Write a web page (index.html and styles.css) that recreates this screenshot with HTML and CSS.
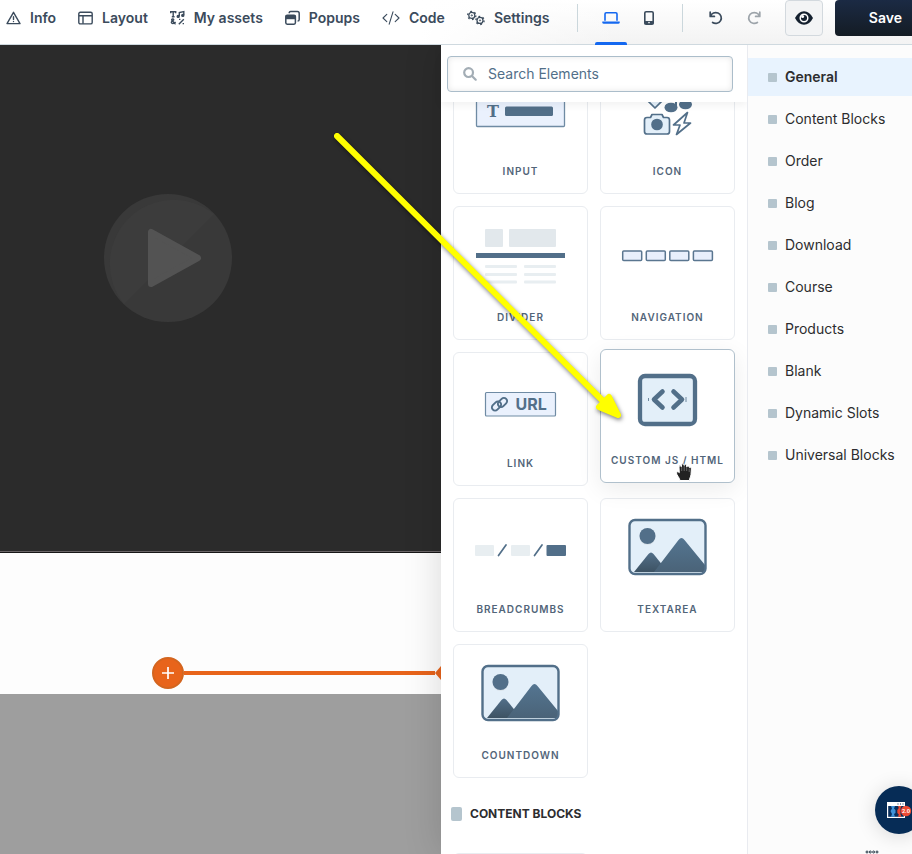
FILE: index.html
```html
<!DOCTYPE html>
<html lang="en">
<head>
<meta charset="utf-8">
<title>Page editor</title>
<link rel="stylesheet" href="styles.css">
</head>
<body>
<header class="toolbar">
  <nav class="menu">
    <button class="menu-item"><svg width="15" height="16" viewBox="0 0 15 16" fill="none" stroke="currentColor" stroke-width="1.4" stroke-linejoin="round" stroke-linecap="round"><path d="M7.5 2.3 14 13.6H1z"/><path d="M7.5 6.8v2.6M7.5 11.4v.1"/></svg>Info</button>
    <button class="menu-item"><svg width="15" height="16" viewBox="0 0 15 16" fill="none" stroke="currentColor" stroke-width="1.4"><rect x=".8" y="2.3" width="13.4" height="11.6" rx="1.5"/><path d="M1 5.8h13M5 5.8v8"/></svg>Layout</button>
    <button class="menu-item"><svg width="15" height="16" viewBox="0 0 15 16" fill="none" stroke="currentColor" stroke-width="1.4"><path d="M.7 3.3V1.8h5v1.5M3.2 2v4.6M1.8 6.7h2.8M9.3 6V2.6l4.5-1V5M5.6 14.2 1.8 10.2c-.9-1.3 2.3-1.9 1.9-.3L1.8 11.4c-1.6 1.8 1.4 3.4 3.8.6M8.8 14.3l5-5"/><circle cx="8.2" cy="6.4" r="1" fill="currentColor"/><circle cx="12.8" cy="5.4" r="1" fill="currentColor"/><path d="M9 9.4h1.4M12.6 13.6H14"/></svg>My assets</button>
    <button class="menu-item"><svg width="15" height="16" viewBox="0 0 15 16" fill="none" stroke="currentColor" stroke-width="1.5"><rect x=".8" y="5.2" width="9.6" height="9" rx="1.4"/><path d="M.8 5.2h9.6v4H.8z" fill="currentColor" stroke="none"/><path d="M4.2 3.3c0-1.2.5-1.7 1.4-1.7h6.8c1.2 0 1.8.6 1.8 1.8v6c0 1-.6 1.6-1.6 1.6"/></svg>Popups</button>
    <button class="menu-item"><svg width="18" height="16" viewBox="0 0 18 16" fill="none" stroke="currentColor" stroke-width="1.1" stroke-linecap="round" stroke-linejoin="round"><path d="M4.8 4.3 1 8l3.8 3.7M13.2 4.3 17 8l-3.8 3.7M11 1.8 7.2 14.2"/></svg>Code</button>
    <button class="menu-item"><svg width="18" height="16" viewBox="0 0 18 16" fill="none" stroke="currentColor"><circle cx="4.8" cy="5.4" r="3" stroke-width="1.2"/><circle cx="4.8" cy="5.4" r="4.1" stroke-width="1.3" stroke-dasharray="1.8 2.5"/><circle cx="4.8" cy="5.4" r=".6"/><circle cx="13" cy="10.4" r="3" stroke-width="1.2"/><circle cx="13" cy="10.4" r="4.1" stroke-width="1.3" stroke-dasharray="1.8 2.5"/><circle cx="13" cy="10.4" r=".6"/></svg>Settings</button>
  </nav>
  <div class="devices">
    <button class="tool tool-active" aria-label="Desktop"><svg width="18" height="16" viewBox="0 0 18 16"><path d="M3 10.8V4q0-1.2 1.2-1.2h9.6Q15 2.800 15 4v6.800" fill="none" stroke="currentColor" stroke-width="1.6"/><path d="M.3 11.500h17.400v.7q0 1.600-1.600 1.600H1.900Q.3 13.800.3 12.200z" fill="currentColor"/></svg></button>
    <button class="tool" aria-label="Mobile"><svg width="12" height="16" viewBox="0 0 12 16"><rect x="1.800" y="1.800" width="8.400" height="12.400" rx="1.300" fill="none" stroke="currentColor" stroke-width="1.600"/><path d="M1.500 11h9v3.200h-9z" fill="currentColor"/><circle cx="6" cy="12.600" r=".8" fill="#fff"/></svg></button>
  </div>
  <div class="history">
    <button class="tool" aria-label="Undo"><svg width="16" height="16" viewBox="0 0 16 16" fill="none" stroke="currentColor" stroke-width="1.700" stroke-linecap="round" stroke-linejoin="round"><path d="M2.200 2.200v4.200h4.200M2.400 6.200A5.600 5.400 0 1 1 4.600 12.500"/></svg></button>
    <button class="tool tool-muted" aria-label="Redo"><svg width="16" height="16" viewBox="0 0 16 16" fill="none" stroke="currentColor" stroke-width="1.700" stroke-linecap="round" stroke-linejoin="round"><path d="M13.800 2.200v4.200H9.600M13.600 6.200A5.600 5.400 0 1 0 11.400 12.500"/></svg></button>
  </div>
  <button class="preview" aria-label="Preview"><svg width="20" height="16" viewBox="0 0 20 16"><path d="M1 8Q4.500 1.200 10 1.200T19 8Q15.500 14.800 10 14.800T1 8z" fill="currentColor"/><circle cx="10" cy="8" r="3.800" fill="none" stroke="#fff" stroke-width="1.500"/><circle cx="8.600" cy="6.600" r="1.500" fill="#fff"/></svg></button>
  <button class="save">Save</button>
</header>
<main class="workspace">
  <section class="canvas" aria-label="Canvas">
    <div class="video">
      <svg width="128" height="128" viewBox="0 0 128 128"><circle cx="64" cy="64" r="64" fill="#393939"/><path d="M20 110A64 64 0 0 1 110 20z" fill="#3c3c3c"/><path d="M47 38v52l47-26z" fill="#535353" stroke="#535353" stroke-width="6" stroke-linejoin="round"/></svg>
    </div>
    <div class="blank">
      <button class="add" aria-label="Add section"><svg width="12" height="12" viewBox="0 0 12 12" stroke="#fff" stroke-width="1.700"><path d="M6 0v12M0 6h12"/></svg></button>
      <div class="add-line"></div>
      <svg width="6" height="16" viewBox="0 0 6 16"><path d="M0 8 6 1v14z" fill="#e8641b"/></svg>
    </div>
    <div class="footer-block"></div>
  </section>
  <section class="panel" aria-label="Elements">
    <div class="search-bar">
      <label class="search"><svg width="14" height="14" viewBox="0 0 14 14" fill="none" stroke="#a3adb5" stroke-width="2.200" stroke-linecap="round"><circle cx="5.600" cy="5.600" r="4.400"/><path d="m9.200 9.200 3.500 3.500"/></svg><input type="text" placeholder="Search Elements" aria-label="Search Elements"></label>
    </div>
    <div class="scroll">
      <div class="cards">
        <button class="card"><svg viewBox="0 0 133 102"><rect x="22.500" y="35" width="88" height="30.500" rx="1" fill="#eaf1fd" stroke="#6f8ba4" stroke-width="1.300"/><text x="33" y="55.500" class="glyph-t">T</text><rect x="51" y="45.500" width="48" height="9.500" rx="1.500" fill="#526f89"/></svg>Input</button>
        <button class="card"><svg viewBox="0 0 133 102" fill="#e3eff9" stroke="#526f89" stroke-width="1.700" stroke-linejoin="round"><path d="M54 47 46 39l4-5h8l4 5z"/><g fill="#526f89" stroke="none"><ellipse cx="70" cy="46.500" rx="6.500" ry="4.800"/><ellipse cx="84.500" cy="43.500" rx="6.500" ry="4.800"/><path d="M74 46V30l16-3v16h-2V31l-12 3v12z"/></g><path d="M43.500 59q0-2.500 2.500-2.500h3.500l1.500-3h10l1.500 3H66q2.500 0 2.500 2.500v11.500q0 2.500-2.500 2.500H46q-2.500 0-2.500-2.500z"/><circle cx="56" cy="63.500" r="5" fill="#526f89"/><path d="M86.500 51.500 72.500 64h6.500l-3.500 9.500L89.500 62H83z" fill="#fff"/></svg>Icon</button>
        <button class="card"><svg viewBox="0 0 133 102"><g fill="#e2e8ec"><rect x="31" y="22" width="18" height="18" rx="1"/><rect x="55" y="22" width="47" height="18" rx="1"/></g><rect x="22" y="46" width="89" height="5" fill="#526f89"/><g fill="#e8eef1"><rect x="31" y="58" width="32" height="3" rx="1"/><rect x="70" y="58" width="32" height="3" rx="1"/><rect x="31" y="66" width="32" height="3" rx="1"/><rect x="70" y="66" width="32" height="3" rx="1"/><rect x="31" y="73.500" width="32" height="3" rx="1"/><rect x="70" y="73.500" width="32" height="3" rx="1"/></g></svg>Divider</button>
        <button class="card"><svg viewBox="0 0 133 102" fill="#e8effc" stroke="#5a7690" stroke-width="1.500"><rect x="21.700" y="44" width="19" height="9.500" rx="1"/><rect x="45.300" y="44" width="19" height="9.500" rx="1"/><rect x="68.800" y="44" width="19" height="9.500" rx="1"/><rect x="92.400" y="44" width="19" height="9.500" rx="1"/></svg>Navigation</button>
        <button class="card"><svg viewBox="0 0 133 102"><rect x="31.500" y="39.500" width="70" height="23.500" rx="1" fill="#eaf1fd" stroke="#6f8ba4" stroke-width="1.200"/><g fill="none" stroke="#526f89" stroke-width="1.900"><rect x="-5.200" y="-3.200" width="10.400" height="6.400" rx="3.200" transform="translate(42.500 53) rotate(-45)"/><rect x="-5.200" y="-3.200" width="10.400" height="6.400" rx="3.200" transform="translate(48.500 49.500) rotate(-45)"/></g><text x="61.500" y="57" class="glyph-url">URL</text></svg>Link</button>
        <button class="card card-hover"><svg viewBox="0 0 133 102"><rect x="39" y="26" width="55" height="48" rx="5" fill="#e3eff9" stroke="#526f89" stroke-width="4.300"/><path d="M61.500 41.500 53 49.500l8.500 8M72.500 41.500l8.500 8-8.500 8" fill="none" stroke="#526f89" stroke-width="4.600" stroke-linecap="round" stroke-linejoin="round"/><path d="M47.500 48v3M85 47v5" stroke="#526f89" stroke-width=".8"/></svg>Custom JS / HTML</button>
        <button class="card"><svg viewBox="0 0 133 102"><g fill="#e8eef1"><rect x="21" y="46" width="19" height="11" rx="1"/><rect x="57" y="46" width="19" height="11" rx="1"/></g><rect x="92.500" y="46" width="19.500" height="11" rx="1" fill="#526f89"/><path d="m44.500 56.500 7.500-10.500M80.500 56.500 88 46" stroke="#526f89" stroke-width="1.700" stroke-linecap="round"/></svg>Breadcrumbs</button>
        <button class="card"><svg viewBox="0 0 133 102"><defs><linearGradient id="hill" x1="0" y1="0" x2="0" y2="1"><stop offset="0" stop-color="#547591"/><stop offset="1" stop-color="#4a6378"/></linearGradient><linearGradient id="slope" x1="0" y1="0" x2="0" y2="1"><stop offset="0" stop-color="#526f89"/><stop offset="1" stop-color="#3d5263"/></linearGradient></defs><g id="photo"><rect x="28.500" y="21" width="76" height="54" rx="5" fill="#e3eff9"/><path d="M33 73 47.500 55q2.500-3 5 0L67 73z" fill="url(#slope)"/><path d="M53 73 77.500 41q3-4 6 0L104 66v7z" fill="url(#hill)"/><circle cx="46.500" cy="38" r="8" fill="#dbe3ea"/><circle cx="46.500" cy="37" r="8" fill="#526f89"/><rect x="28.500" y="21" width="76" height="54" rx="5.500" fill="none" stroke="#526f89" stroke-width="2.400"/></g></svg>Textarea</button>
        <button class="card"><svg viewBox="0 0 133 102"><use href="#photo"/></svg>Countdown</button>
      </div>
      <h2 class="group-title">CONTENT BLOCKS</h2>
      <div class="cards">
        <button class="card" aria-label="Content block"></button>
      </div>
    </div>
  </section>
  <nav class="sidebar">
    <a class="cat cat-active" href="#">General</a>
    <a class="cat" href="#">Content Blocks</a>
    <a class="cat" href="#">Order</a>
    <a class="cat" href="#">Blog</a>
    <a class="cat" href="#">Download</a>
    <a class="cat" href="#">Course</a>
    <a class="cat" href="#">Products</a>
    <a class="cat" href="#">Blank</a>
    <a class="cat" href="#">Dynamic Slots</a>
    <a class="cat" href="#">Universal Blocks</a>
  </nav>
</main>
<svg class="pointer-arrow" width="330" height="320" viewBox="0 0 330 320"><path d="M17 16 284 282" stroke="#ffff00" stroke-width="6" stroke-linecap="round"/><path d="M298 295 279 287 289 277z" fill="#ffff00" stroke="#ffff00" stroke-width="6" stroke-linejoin="round"/></svg>
<svg class="hand" width="18" height="20" viewBox="0 0 18 20"><path d="M5 18.500C4.500 15.500 1.500 13 1.500 11c0-1.600 1.700-1.700 2.800-.3L4 5c0-1.900 2-1.900 2.300-.2L6.600 3c.2-1.900 2.200-1.900 2.400 0l.2.500c.4-1.700 2.300-1.500 2.400.4l.1 1c.6-1.400 2.600-1.100 2.600.6 1.100-.7 2.200 0 2.100 1.500L16 12.500c-.3 2.500-1.500 3.500-1.500 6z" fill="#222" stroke="#fff" stroke-width="1"/><path d="M6.700 5v4M9.200 4v5M11.700 5v4M14.200 6.500V10" stroke="#999" stroke-width=".6"/></svg>
<button class="chat" aria-label="Help"><svg width="26" height="18" viewBox="0 0 26 18"><path d="M0 0h18v16H0z" fill="#fff"/><path d="M1.200 4h15.600v10.800H1.200z" fill="#0a2f5c"/><path d="M4 4h4l-1 2.500L8.500 8v3L7 12l1 2.800H4L5 12 3.500 9 5 6.500z" fill="#3f92d8"/><path d="M14.500 4H11l.8 2-1.500 2v3l1.500 1.500-.8 2.300h3.500l-1-2.300V6z" fill="#ec4a33"/><path d="M10.500 2h1M13 2h1M15.500 2h1" stroke="#0a2f5c"/><circle cx="19" cy="9" r="5.200" fill="#ec4a33"/><text x="19" y="11" class="glyph-badge">2.0</text></svg></button>
<svg class="grip" width="14" height="4" viewBox="0 0 14 4" fill="none" stroke="#243746" stroke-width="1"><circle cx="2" cy="2" r="1"/><circle cx="5.300" cy="2" r="1"/><circle cx="8.600" cy="2" r="1"/><circle cx="12" cy="2" r="1"/></svg>
</body>
</html>
```
FILE: styles.css
```css
* { box-sizing: border-box; }

body {
  margin: 0;
  height: 100vh;
  display: flex;
  flex-direction: column;
  overflow: hidden;
  position: relative;
  font-family: Inter, "Liberation Sans", sans-serif;
  font-size: 14px;
  line-height: 18px;
  color: #2d2d2f;
  background: #fff;
}

button {
  font: inherit;
  color: inherit;
  border: 0;
  padding: 0;
  background: none;
  flex: none;
}

svg { display: block; flex: none; }

/* Toolbar */
.toolbar {
  flex: none;
  height: 45px;
  display: flex;
  align-items: flex-start;
  border-bottom: 1px solid #cfd9df;
  background:
    linear-gradient(to right, #fff 420px, rgba(255, 255, 255, 0) 620px),
    linear-gradient(to bottom, #fff, #f3f3f3);
  color: #3b4b5c;
}

.menu {
  display: flex;
  gap: 22px;
  padding-left: 6px;
  flex: none;
}

.menu-item {
  display: flex;
  align-items: center;
  gap: 9px;
  height: 36px;
  font-weight: 600;
}

.devices,
.history {
  display: flex;
  position: relative;
  flex: none;
}

.devices { margin-left: 28px; padding: 0 16px 0 17px; }
.history { padding: 0 12px 0 15px; }

.devices::before,
.history::before {
  content: "";
  width: 1px;
  height: 28px;
  position: absolute;
  left: 0;
  top: 4px;
  background: #cbd7dc;
}

.tool {
  width: 38px;
  height: 44px;
  padding-bottom: 8px;
  display: flex;
  align-items: center;
  justify-content: center;
}

.devices .tool { width: 34px; }
.devices .tool + .tool { margin-left: 4px; }

.tool-active {
  color: #1468f0;
  position: relative;
}

.tool-active::after {
  content: "";
  position: absolute;
  left: 1px;
  right: 1px;
  bottom: -1px;
  height: 3px;
  border-radius: 2px 2px 0 0;
  background: #1468f0;
}

.tool-muted { color: #9da4aa; }

.preview {
  width: 38px;
  height: 36px;
  display: flex;
  align-items: center;
  justify-content: center;
  border: 1px solid #d3d9de;
  border-radius: 4px;
  background: #f3f4f5;
  color: #14202e;
}

.save {
  width: 100px;
  height: 36px;
  margin-left: 12px;
  border-radius: 4px;
  background: linear-gradient(#1b2a44, #141c24);
  color: #fff;
  font-weight: 600;
}

/* Workspace */
.workspace {
  flex: 1;
  min-height: 0;
  display: flex;
}

.canvas {
  flex: 1;
  min-width: 0;
  display: flex;
  flex-direction: column;
  overflow: hidden;
}

.video {
  height: 508px;
  flex: none;
  padding: 149px 0 0 104px;
  background: #2b2b2b;
  border-bottom: 1px solid #171717;
  box-shadow: inset 0 -1px #6b6668;
}

.blank {
  height: 141px;
  flex: none;
  display: flex;
  align-items: center;
  padding: 99px 0 0 152px;
  background: #fdfdfd;
}

.add {
  width: 32px;
  height: 32px;
  display: flex;
  align-items: center;
  justify-content: center;
  border: 2px solid #d3651f;
  border-radius: 50%;
  background: #e8641b;
}

.add-line {
  flex: 1;
  height: 4px;
  background: #e8641b;
}

.footer-block {
  flex: 1;
  background: #9e9e9e;
}

/* Elements panel */
.panel {
  width: 306px;
  flex: none;
  display: flex;
  flex-direction: column;
  background: #fff;
  box-shadow: 0 0 36px rgba(0, 0, 0, .15);
  clip-path: inset(0 0 0 -50px);
}

.search-bar {
  padding: 11px 14px 10px 6px;
  background: #fff;
  box-shadow: 0 3px 8px rgba(0, 0, 0, .06);
  z-index: 1;
}

.search {
  height: 36px;
  display: flex;
  align-items: center;
  gap: 11px;
  padding-left: 15px;
  border: 1px solid #abbdca;
  border-radius: 4px;
  box-shadow: inset 0 0 6px rgba(0, 0, 0, .1);
}

.search input {
  flex: 1;
  min-width: 0;
  height: 18px;
  padding: 0;
  border: 0;
  outline: 0;
  background: none;
  font: inherit;
}

.search input::placeholder { color: #526f89; opacity: 1; }

.scroll {
  flex: 1;
  min-height: 0;
  overflow: hidden;
}

.cards {
  display: grid;
  grid-template-columns: 1fr 1fr;
  gap: 12px;
  padding: 0 12px;
}

.cards:first-child { margin-top: -42px; }

.card {
  height: 134px;
  border: 1px solid #e9ecf0;
  border-radius: 6px;
  background: #fff;
  display: flex;
  flex-direction: column;
  align-items: center;
  font-size: 10px;
  line-height: 16px;
  font-weight: 600;
  letter-spacing: 1px;
  text-transform: uppercase;
  white-space: nowrap;
  color: #526579;
}

.card svg { width: 133px; height: 102px; }

.card-hover {
  transform: translateY(-3px);
  border-color: #b0c0cc;
  box-shadow: 0 6px 24px rgba(0, 0, 0, .08);
}

.glyph-t { font: bold 16px "DejaVu Serif", serif; fill: #526f89; letter-spacing: 0; }
.glyph-url { font: bold 16px Inter, sans-serif; fill: #526f89; letter-spacing: 0; }
.glyph-badge { font: bold 5px Inter, sans-serif; fill: #fff; text-anchor: middle; letter-spacing: 0; }

.group-title {
  display: flex;
  align-items: center;
  gap: 8px;
  margin: 23px 0 26px;
  padding-left: 10px;
  font-size: 12px;
  line-height: 26px;
  font-weight: 700;
}

.group-title::before {
  content: "";
  width: 11px;
  height: 14px;
  border-radius: 2px;
  background: #b5c5ce;
}

/* Categories */
.sidebar {
  width: 165px;
  flex: none;
  display: flex;
  flex-direction: column;
  gap: 4px;
  padding-top: 13px;
  border-left: 1px solid #e9ebf0;
  background: #fcfcfc;
}

.cat {
  height: 38px;
  display: flex;
  align-items: center;
  gap: 8px;
  padding-left: 20px;
  color: inherit;
  text-decoration: none;
  white-space: nowrap;
}

.cat::before {
  content: "";
  width: 9px;
  height: 9px;
  border-radius: 1px;
  background: #b5c5ce;
}

.cat-active {
  background: #e8f3fe;
  font-weight: 600;
}

/* Floating items */
.pointer-arrow {
  position: absolute;
  left: 320px;
  top: 120px;
  filter: drop-shadow(1px 2px 2px rgba(0, 0, 0, .5));
  pointer-events: none;
}

.hand {
  position: absolute;
  left: 675px;
  top: 462px;
}

.chat {
  position: absolute;
  left: 875px;
  top: 786px;
  width: 48px;
  height: 48px;
  padding: 2px 0 0 12px;
  border-radius: 50%;
  background: #062c56;
  box-shadow: 0 2px 20px rgba(0, 0, 0, .15);
}

.grip {
  position: absolute;
  left: 865px;
  top: 850px;
}
```
